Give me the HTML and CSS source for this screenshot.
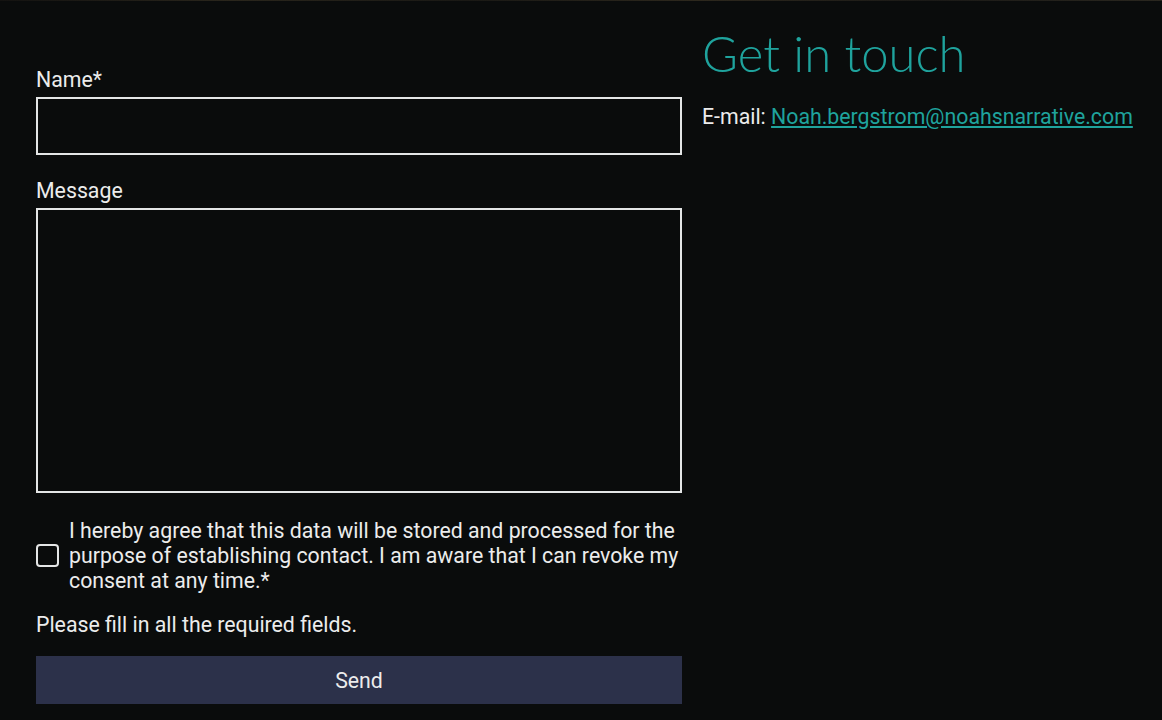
FILE: index.html
```html
<!DOCTYPE html>
<html>
<head>
    <meta charset="utf-8" />
    <title>Contact</title>
    <link rel="stylesheet" href="styles.css">
</head>
<body>
    <div class="top-strip"></div>
    <div class="contact">
        <form class="contact-form">
            <label class="field-label" for="name">Name*</label>
            <input class="field-input" type="text" id="name">

            <label class="field-label" for="message">Message</label>
            <textarea class="field-area" id="message"></textarea>

            <div class="consent">
                <span class="checkbox"></span>
                <p class="consent-text">I hereby agree that this data will be stored and processed for the purpose of establishing contact. I am aware that I can revoke my consent at any time.*</p>
            </div>

            <p class="form-note">Please fill in all the required fields.</p>

            <button class="send-button" type="button">Send</button>
        </form>

        <div class="contact-info">
            <h1 class="contact-title">Get in touch</h1>
            <p class="contact-mail">E-mail: <a href="#">Noah.bergstrom@noahsnarrative.com</a></p>
        </div>
    </div>
</body>
</html>
```

FILE: styles.css
```css
html {
    background-color: #0a0c0c;
}

body {
    margin: 0;
    color: #ececec;
    font-family: Roboto, "Liberation Sans", sans-serif;
    font-size: 21.3px;
}

.top-strip {
    height: 1px;
    background: linear-gradient(90deg, #141311, #2a261c 20%, #1a1915 40%, #2d281d 60%, #1b1a17 80%, #2a271f);
}

.contact {
    display: grid;
    grid-template-columns: 646px 1fr;
    gap: 20px;
    padding: 0 0 0 36px;
}

/* 表单 */
.contact-form {
    display: flex;
    flex-direction: column;
    padding-top: 67px;
}

.field-label {
    display: block;
    line-height: 24px;
}

.field-input,
.field-area {
    box-sizing: border-box;
    width: 100%;
    margin: 5px 0 0;
    border: 2px solid #e4e6e6;
    background: transparent;
    color: #fff;
    font: inherit;
}

.field-input {
    height: 58px;
    margin-bottom: 24px;
}

.field-area {
    height: 285px;
    resize: none;
}

.consent {
    display: flex;
    align-items: center;
    gap: 10px;
    margin-top: 25px;
}

.checkbox {
    flex: none;
    width: 19px;
    height: 19px;
    border: 2px solid #e4e6e6;
    border-radius: 4px;
}

.consent-text {
    margin: 0;
    line-height: 25px;
}

.form-note {
    margin: 20px 0 0;
    line-height: 24px;
}

.send-button {
    margin-top: 19px;
    height: 48px;
    border: none;
    background: #2c314a;
    color: #ececec;
    font: inherit;
    cursor: pointer;
}

/* 联系方式 */
.contact-info {
    padding-top: 24px;
}

.contact-title {
    margin: 0;
    font-family: Lato, "Open Sans", sans-serif;
    font-weight: 300;
    font-size: 49px;
    line-height: 56px;
    color: #1fa39d;
}

.contact-mail {
    margin: 24px 0 0;
    line-height: 24px;
    white-space: nowrap;
}

.contact-mail a {
    color: #1fa39d;
}
```
